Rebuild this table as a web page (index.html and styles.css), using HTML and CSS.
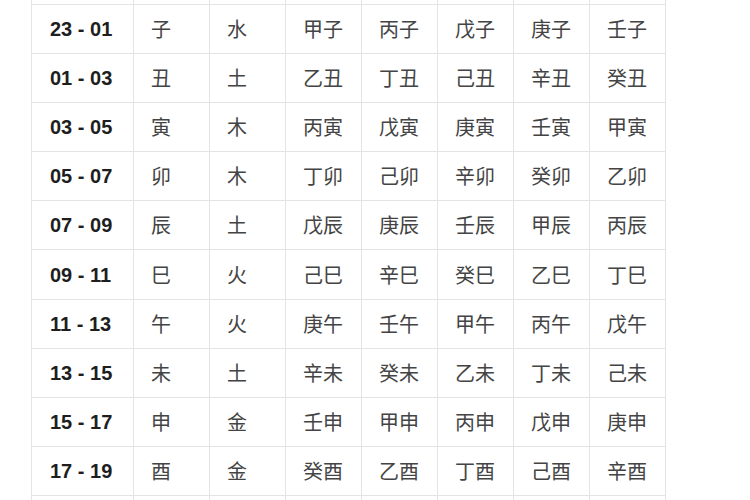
FILE: index.html
```html
<!DOCTYPE html>
<html lang="zh">
<head>
<meta charset="utf-8">
<link rel="stylesheet" href="styles.css">
</head>
<body>
<div class="wrap">
<table class="tbl">
<colgroup>
<col class="c-time"><col class="c"><col class="c"><col class="c"><col class="c"><col class="c"><col class="c"><col class="c">
</colgroup>
<tbody>
<tr class="head"><td></td><td></td><td></td><td></td><td></td><td></td><td></td><td></td></tr>
<tr><td class="t">23 - 01</td><td>子</td><td>水</td><td>甲子</td><td>丙子</td><td>戊子</td><td>庚子</td><td>壬子</td></tr>
<tr><td class="t">01 - 03</td><td>丑</td><td>土</td><td>乙丑</td><td>丁丑</td><td>己丑</td><td>辛丑</td><td>癸丑</td></tr>
<tr><td class="t">03 - 05</td><td>寅</td><td>木</td><td>丙寅</td><td>戊寅</td><td>庚寅</td><td>壬寅</td><td>甲寅</td></tr>
<tr><td class="t">05 - 07</td><td>卯</td><td>木</td><td>丁卯</td><td>己卯</td><td>辛卯</td><td>癸卯</td><td>乙卯</td></tr>
<tr><td class="t">07 - 09</td><td>辰</td><td>土</td><td>戊辰</td><td>庚辰</td><td>壬辰</td><td>甲辰</td><td>丙辰</td></tr>
<tr><td class="t">09 - 11</td><td>巳</td><td>火</td><td>己巳</td><td>辛巳</td><td>癸巳</td><td>乙巳</td><td>丁巳</td></tr>
<tr><td class="t">11 - 13</td><td>午</td><td>火</td><td>庚午</td><td>壬午</td><td>甲午</td><td>丙午</td><td>戊午</td></tr>
<tr><td class="t">13 - 15</td><td>未</td><td>土</td><td>辛未</td><td>癸未</td><td>乙未</td><td>丁未</td><td>己未</td></tr>
<tr><td class="t">15 - 17</td><td>申</td><td>金</td><td>壬申</td><td>甲申</td><td>丙申</td><td>戊申</td><td>庚申</td></tr>
<tr><td class="t">17 - 19</td><td>酉</td><td>金</td><td>癸酉</td><td>乙酉</td><td>丁酉</td><td>己酉</td><td>辛酉</td></tr>
<tr><td class="t"></td><td></td><td></td><td></td><td></td><td></td><td></td><td></td></tr>
</tbody>
</table>
</div>
</body>
</html>
```
FILE: styles.css
```css
html, body {
  margin: 0;
  padding: 0;
  background: #ffffff;
}
.wrap {
  height: 500px;
  overflow: hidden;
  padding-left: 31px;
}
.tbl {
  margin-top: -46px;
  border-collapse: collapse;
  table-layout: fixed;
  width: 635px;
}
.c-time { width: 102px; }
.c { width: 76px; }
.tbl tr { height: 49.1px; }
.tbl td {
  border: 1px solid #e4e4e4;
  padding: 0 0 0 17px;
  text-align: left;
  vertical-align: middle;
  font-family: "Noto Sans CJK SC", "Noto Sans", sans-serif;
  font-size: 20px;
  color: #444444;
  white-space: nowrap;
  line-height: 1;
}
.tbl td.t {
  padding-left: 18px;
  font-family: "Liberation Sans", Arial, sans-serif;
  font-weight: bold;
  font-size: 20px;
  color: #1e1e1e;
}
.tbl tr.head td { height: 49px; }
```
